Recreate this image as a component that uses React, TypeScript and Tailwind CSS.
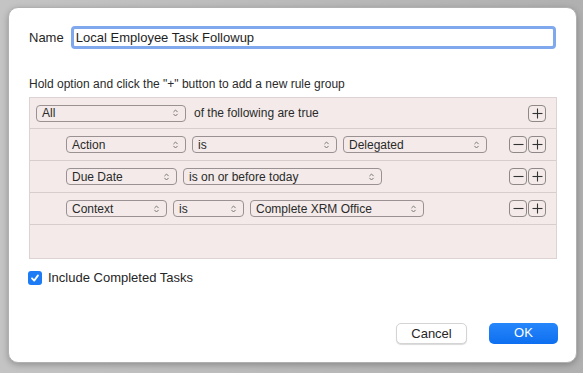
import React from 'react'

const font = { fontFamily: '"Liberation Sans", Arial, sans-serif' }

function Chevrons() {
  return (
    <svg width="7" height="10" viewBox="0 0 7 10" className="shrink-0">
      <path d="M1.7 3.8 L3.5 2 L5.3 3.8" fill="none" stroke="#777" strokeWidth="1" strokeLinecap="round" strokeLinejoin="round" />
      <path d="M1.7 6.2 L3.5 8 L5.3 6.2" fill="none" stroke="#777" strokeWidth="1" strokeLinecap="round" strokeLinejoin="round" />
    </svg>
  )
}

function Popup({ label, width }: { label: string; width: string }) {
  return (
    <div
      className={`${width} h-[17px] flex items-center justify-between pl-[5px] pr-[6px] border border-[#9a9292] rounded-[4px] text-[12px] text-[#2a2a2a] shrink-0`}
    >
      <span className="leading-none">{label}</span>
      <Chevrons />
    </div>
  )
}

function SquareBtn({ kind }: { kind: 'plus' | 'minus' }) {
  return (
    <div className="w-[18px] h-[17px] border border-[#8e8888] rounded-[4px] flex items-center justify-center">
      <svg width="11" height="11" viewBox="0 0 11 11">
        <path d="M0.5 5.5 H10.5" stroke="#333" strokeWidth="1.1" />
        {kind === 'plus' && <path d="M5.5 0.5 V10.5" stroke="#333" strokeWidth="1.1" />}
      </svg>
    </div>
  )
}

function RuleRow({ children }: { children: React.ReactNode }) {
  return (
    <div className="h-[32px] border-b border-[#d6cdcc] flex items-center pl-[36px] pr-[10px]">
      <div className="flex items-center gap-[6px] flex-1">{children}</div>
      <div className="flex gap-[1px]">
        <SquareBtn kind="minus" />
        <SquareBtn kind="plus" />
      </div>
    </div>
  )
}

export default function App() {
  return (
    <div className="w-[583px] h-[373px] bg-gradient-to-r from-[#c4c4c4] to-[#b0b0b0] pt-[7px] pl-[8px] overflow-hidden" style={font}>
      <div className="w-[569px] h-[356px] bg-white rounded-[10px] border border-[#b0b0b0] shadow-[0_2px_6px_rgba(0,0,0,0.25)] px-[20px] pt-[18px] text-[#262626]">
        {/* name field */}
        <div className="flex items-center">
          <span className="text-[13px] w-[42px]">Name</span>
          <div className="w-[487px] h-[23px] border-[3px] border-[#80a8ec] rounded-[4px] flex items-center pl-[2px] text-[13px] text-[#1e1e1e]">
            Local Employee Task Followup
          </div>
        </div>

        <p className="mt-[28px] text-[12px] leading-[15px] text-[#2a2a2a]">
          Hold option and click the "+" button to add a new rule group
        </p>

        {/* rule editor */}
        <div className="mt-[5px] w-[528px] h-[162px] bg-[#f3eae9] border border-[#dcd3d2]">
          <div className="h-[31px] border-b border-[#d6cdcc] flex items-center pl-[6px] pr-[10px]">
            <Popup label="All" width="w-[150px]" />
            <span className="ml-[8px] text-[12px] text-[#2a2a2a] flex-1">of the following are true</span>
            <SquareBtn kind="plus" />
          </div>
          <RuleRow>
            <Popup label="Action" width="w-[120px]" />
            <Popup label="is" width="w-[145px]" />
            <Popup label="Delegated" width="w-[144px]" />
          </RuleRow>
          <RuleRow>
            <Popup label="Due Date" width="w-[111px]" />
            <Popup label="is on or before today" width="w-[199px]" />
          </RuleRow>
          <RuleRow>
            <Popup label="Context" width="w-[101px]" />
            <Popup label="is" width="w-[71px]" />
            <Popup label="Complete XRM Office" width="w-[174px]" />
          </RuleRow>
        </div>

        {/* checkbox */}
        <div className="mt-[9px] flex items-center gap-[6px] -ml-[1px]">
          <div className="w-[14px] h-[14px] rounded-[3px] bg-[#1c7bf5] flex items-center justify-center">
            <svg width="10" height="10" viewBox="0 0 10 10">
              <path d="M2 5.3 L4.2 7.6 L8 2.4" fill="none" stroke="white" strokeWidth="1.8" strokeLinecap="round" strokeLinejoin="round" />
            </svg>
          </div>
          <span className="text-[13px]">Include Completed Tasks</span>
        </div>

        {/* buttons */}
        <div className="mt-[35px] flex justify-end gap-[22px] w-[529px]">
          <button className="w-[71px] h-[21px] bg-white rounded-[5px] border border-[#d4d4d4] shadow-[0_1px_1px_rgba(0,0,0,0.15)] text-[13px] text-[#262626]">
            Cancel
          </button>
          <button className="w-[69px] h-[21px] rounded-[5px] bg-gradient-to-b from-[#2686fb] to-[#0d6ff0] text-[13px] text-white">
            OK
          </button>
        </div>
      </div>
    </div>
  )
}
